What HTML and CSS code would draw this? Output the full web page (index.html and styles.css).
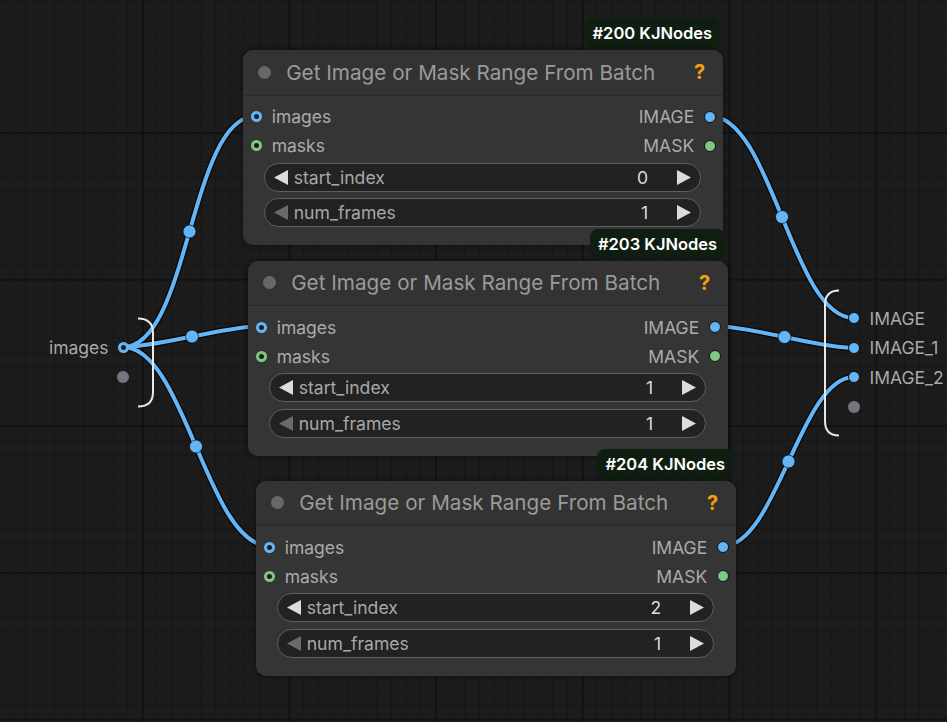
FILE: index.html
```html
<!DOCTYPE html>
<html>
<head>
<meta charset="utf-8">
<link rel="stylesheet" href="styles.css">
</head>
<body>
<div class="canvas">
  <svg class="links" width="947" height="722" viewBox="0 0 947 722">
    <g class="wire-shadow">
      <path d="M123,347 C189.6,347 189.4,116 256,116"/>
      <path d="M123,347 C157.9,347 226.1,326 261,326"/>
      <path d="M123,347 C184.7,347 207.3,546 269,546"/>
      <path d="M710,116 C772,116 792,318 854,318"/>
      <path d="M715,326 C750.2,326 818.8,348 854,348"/>
      <path d="M723,546 C776.5,546 800.5,377 854,377"/>
    </g>
    <g class="wire">
      <path d="M123,347 C189.6,347 189.4,116 256,116"/>
      <path d="M123,347 C157.9,347 226.1,326 261,326"/>
      <path d="M123,347 C184.7,347 207.3,546 269,546"/>
      <path d="M710,116 C772,116 792,318 854,318"/>
      <path d="M715,326 C750.2,326 818.8,348 854,348"/>
      <path d="M723,546 C776.5,546 800.5,377 854,377"/>
    </g>
    <g class="mid">
      <circle cx="189.5" cy="231.5" r="6.5"/>
      <circle cx="192" cy="336.5" r="6.5"/>
      <circle cx="196" cy="446.5" r="6.5"/>
      <circle cx="782" cy="217" r="6.5"/>
      <circle cx="784.5" cy="337" r="6.5"/>
      <circle cx="788.5" cy="461.5" r="6.5"/>
    </g>
    <path class="bracket" d="M138,318.5 Q153,318.5 153,333 L153,392 Q153,406.5 138,406.5"/>
    <path class="bracket" d="M839,290.5 Q825,290.5 825,305 L825,421 Q825,435.5 839,435.5"/>
  </svg>

  <div class="io io-in">
    <div class="io-row"><span class="io-label">images</span><span class="ring"></span></div>
    <div class="io-row"><span class="pin grey"></span></div>
  </div>

  <div class="io io-out">
    <div class="io-row"><span class="pin blue"></span><span class="io-label">IMAGE</span></div>
    <div class="io-row"><span class="pin blue"></span><span class="io-label">IMAGE_1</span></div>
    <div class="io-row"><span class="pin blue"></span><span class="io-label">IMAGE_2</span></div>
    <div class="io-row"><span class="pin grey"></span></div>
  </div>

  <div class="node n1">
    <div class="badge">#200 KJNodes</div>
    <div class="node-body">
      <div class="title"><span class="title-dot"></span><span class="title-text">Get Image or Mask Range From Batch</span><span class="help">?</span></div>
      <div class="slots">
        <div class="slot-row"><div class="slot-in"><span class="ring"></span><span>images</span></div><div class="slot-out"><span>IMAGE</span><span class="pin blue"></span></div></div>
        <div class="slot-row"><div class="slot-in"><span class="ring green"></span><span>masks</span></div><div class="slot-out"><span>MASK</span><span class="pin green"></span></div></div>
      </div>
      <div class="widgets">
        <div class="widget"><svg class="arrow" viewBox="0 0 14 15"><polygon points="14,0 14,15 0,7.5"/></svg><span class="w-label">start_index</span><span class="w-value">0</span><svg class="arrow" viewBox="0 0 14 15"><polygon points="0,0 0,15 14,7.5"/></svg></div>
        <div class="widget"><svg class="arrow dim" viewBox="0 0 14 15"><polygon points="14,0 14,15 0,7.5"/></svg><span class="w-label">num_frames</span><span class="w-value">1</span><svg class="arrow" viewBox="0 0 14 15"><polygon points="0,0 0,15 14,7.5"/></svg></div>
      </div>
    </div>
  </div>

  <div class="node n2">
    <div class="badge">#203 KJNodes</div>
    <div class="node-body">
      <div class="title"><span class="title-dot"></span><span class="title-text">Get Image or Mask Range From Batch</span><span class="help">?</span></div>
      <div class="slots">
        <div class="slot-row"><div class="slot-in"><span class="ring"></span><span>images</span></div><div class="slot-out"><span>IMAGE</span><span class="pin blue"></span></div></div>
        <div class="slot-row"><div class="slot-in"><span class="ring green"></span><span>masks</span></div><div class="slot-out"><span>MASK</span><span class="pin green"></span></div></div>
      </div>
      <div class="widgets">
        <div class="widget"><svg class="arrow" viewBox="0 0 14 15"><polygon points="14,0 14,15 0,7.5"/></svg><span class="w-label">start_index</span><span class="w-value">1</span><svg class="arrow" viewBox="0 0 14 15"><polygon points="0,0 0,15 14,7.5"/></svg></div>
        <div class="widget"><svg class="arrow dim" viewBox="0 0 14 15"><polygon points="14,0 14,15 0,7.5"/></svg><span class="w-label">num_frames</span><span class="w-value">1</span><svg class="arrow" viewBox="0 0 14 15"><polygon points="0,0 0,15 14,7.5"/></svg></div>
      </div>
    </div>
  </div>

  <div class="node n3">
    <div class="badge">#204 KJNodes</div>
    <div class="node-body">
      <div class="title"><span class="title-dot"></span><span class="title-text">Get Image or Mask Range From Batch</span><span class="help">?</span></div>
      <div class="slots">
        <div class="slot-row"><div class="slot-in"><span class="ring"></span><span>images</span></div><div class="slot-out"><span>IMAGE</span><span class="pin blue"></span></div></div>
        <div class="slot-row"><div class="slot-in"><span class="ring green"></span><span>masks</span></div><div class="slot-out"><span>MASK</span><span class="pin green"></span></div></div>
      </div>
      <div class="widgets">
        <div class="widget"><svg class="arrow" viewBox="0 0 14 15"><polygon points="14,0 14,15 0,7.5"/></svg><span class="w-label">start_index</span><span class="w-value">2</span><svg class="arrow" viewBox="0 0 14 15"><polygon points="0,0 0,15 14,7.5"/></svg></div>
        <div class="widget"><svg class="arrow dim" viewBox="0 0 14 15"><polygon points="14,0 14,15 0,7.5"/></svg><span class="w-label">num_frames</span><span class="w-value">1</span><svg class="arrow" viewBox="0 0 14 15"><polygon points="0,0 0,15 14,7.5"/></svg></div>
      </div>
    </div>
  </div>
</div>
</body>
</html>
```

FILE: styles.css
```css
html, body {
  margin: 0;
  padding: 0;
  background: #1b1b1b;
}

.canvas {
  position: relative;
  width: 947px;
  height: 722px;
  overflow: hidden;
  font-family: Inter, "Noto Sans", sans-serif;
  background-color: #1c1c1c;
  background-image:
    linear-gradient(90deg, #121212 0 2px, transparent 2px),
    linear-gradient(180deg, #121212 0 2px, transparent 2px),
    linear-gradient(90deg, #161616 0 1px, transparent 1px),
    linear-gradient(180deg, #161616 0 1px, transparent 1px);
  background-size: 146.67px 146.67px, 146.67px 146.67px, 14.667px 14.667px, 14.667px 14.667px;
  background-position: 142px 0, 0 132px, 10px 0, 0 0.5px;
}

.links {
  position: absolute;
  left: 0;
  top: 0;
}

.wire-shadow path {
  fill: none;
  stroke: rgba(0, 0, 0, 0.75);
  stroke-width: 6.5;
}

.wire path {
  fill: none;
  stroke: #64b5f6;
  stroke-width: 4;
}

.mid circle {
  fill: #64b5f6;
  stroke: rgba(0, 0, 0, 0.6);
  stroke-width: 1;
}

.bracket {
  fill: none;
  stroke: #e8e8e8;
  stroke-width: 2;
}

/* IO nodes on the canvas */
.io {
  position: absolute;
  display: flex;
  flex-direction: column;
  font-size: 17.5px;
  color: #a9a9a9;
}

.io-in {
  left: 29px;
  top: 332px;
  width: 100px;
}

.io-out {
  left: 848px;
  top: 303.5px;
}

.io-row {
  height: 29.5px;
  display: flex;
  align-items: center;
  gap: 9.5px;
}

.io-in .io-row {
  height: 30px;
  justify-content: flex-end;
}

/* sockets */
.ring {
  box-sizing: border-box;
  width: 11px;
  height: 11px;
  border-radius: 50%;
  border: 3px solid #64b5f6;
  background: #1d1d1d;
  flex: none;
}

.ring.green {
  border-color: #81c784;
}

.pin {
  box-sizing: border-box;
  width: 12px;
  height: 12px;
  border-radius: 50%;
  border: 1px solid #111;
  flex: none;
}

.pin.blue {
  background: #64b5f6;
}

.pin.green {
  background: #81c784;
}

.pin.grey {
  background: #77737f;
  border-color: transparent;
}

/* nodes */
.node {
  position: absolute;
  width: 480.5px;
  height: 195px;
}

.n1 { left: 242.7px; top: 50px; }
.n2 { left: 247.7px; top: 260.5px; }
.n3 { left: 255.7px; top: 480.5px; }

.badge {
  position: absolute;
  right: 3px;
  top: -32px;
  height: 30px;
  line-height: 30px;
  padding: 0 8px;
  border-radius: 8px;
  background: #0f1e10;
  color: #ffffff;
  font-size: 16.5px;
  font-weight: 600;
  white-space: nowrap;
}

.node-body {
  position: relative;
  height: 100%;
  box-sizing: border-box;
  background: #353535;
  border-radius: 10px;
  box-shadow: 0 0 5px rgba(0, 0, 0, 0.55);
  display: flex;
  flex-direction: column;
}

.title {
  box-sizing: border-box;
  height: 45.5px;
  display: flex;
  align-items: center;
  padding: 0 18px 0 15px;
  background: #333333;
  border-bottom: 1px solid #2a2a2a;
  border-radius: 10px 10px 0 0;
}

.title-dot {
  width: 13px;
  height: 13px;
  border-radius: 50%;
  background: #686868;
  flex: none;
}

.title-text {
  margin-left: 15.5px;
  font-size: 20.7px;
  color: #9a9a9a;
  white-space: nowrap;
}

.help {
  margin-left: auto;
  font-size: 20px;
  font-weight: 700;
  color: #f3a10c;
}

.slots {
  padding-top: 6.5px;
  display: flex;
  flex-direction: column;
}

.slot-row {
  height: 29px;
  display: flex;
  align-items: center;
  justify-content: space-between;
  padding: 0 7.5px 0 8px;
  font-size: 17.5px;
  color: #ababab;
}

.slot-in,
.slot-out {
  display: flex;
  align-items: center;
}

.slot-in {
  gap: 10px;
}

.slot-out {
  gap: 9.5px;
}

.widgets {
  margin: 2.7px 22px 0 21.5px;
  display: flex;
  flex-direction: column;
  gap: 6.6px;
}

.widget {
  box-sizing: border-box;
  height: 29px;
  display: flex;
  align-items: center;
  padding: 0 9px;
  border: 1px solid #5e5e5e;
  border-radius: 15px;
  background: #222222;
  font-size: 17.6px;
}

.arrow {
  width: 14px;
  height: 15px;
  flex: none;
  fill: #dcdcdc;
}

.arrow.dim {
  fill: #6a6a6a;
}

.w-label {
  margin-left: 5.5px;
  color: #a8a8a8;
}

.w-value {
  margin-left: auto;
  margin-right: 29px;
  color: #dcdcdc;
}
```
